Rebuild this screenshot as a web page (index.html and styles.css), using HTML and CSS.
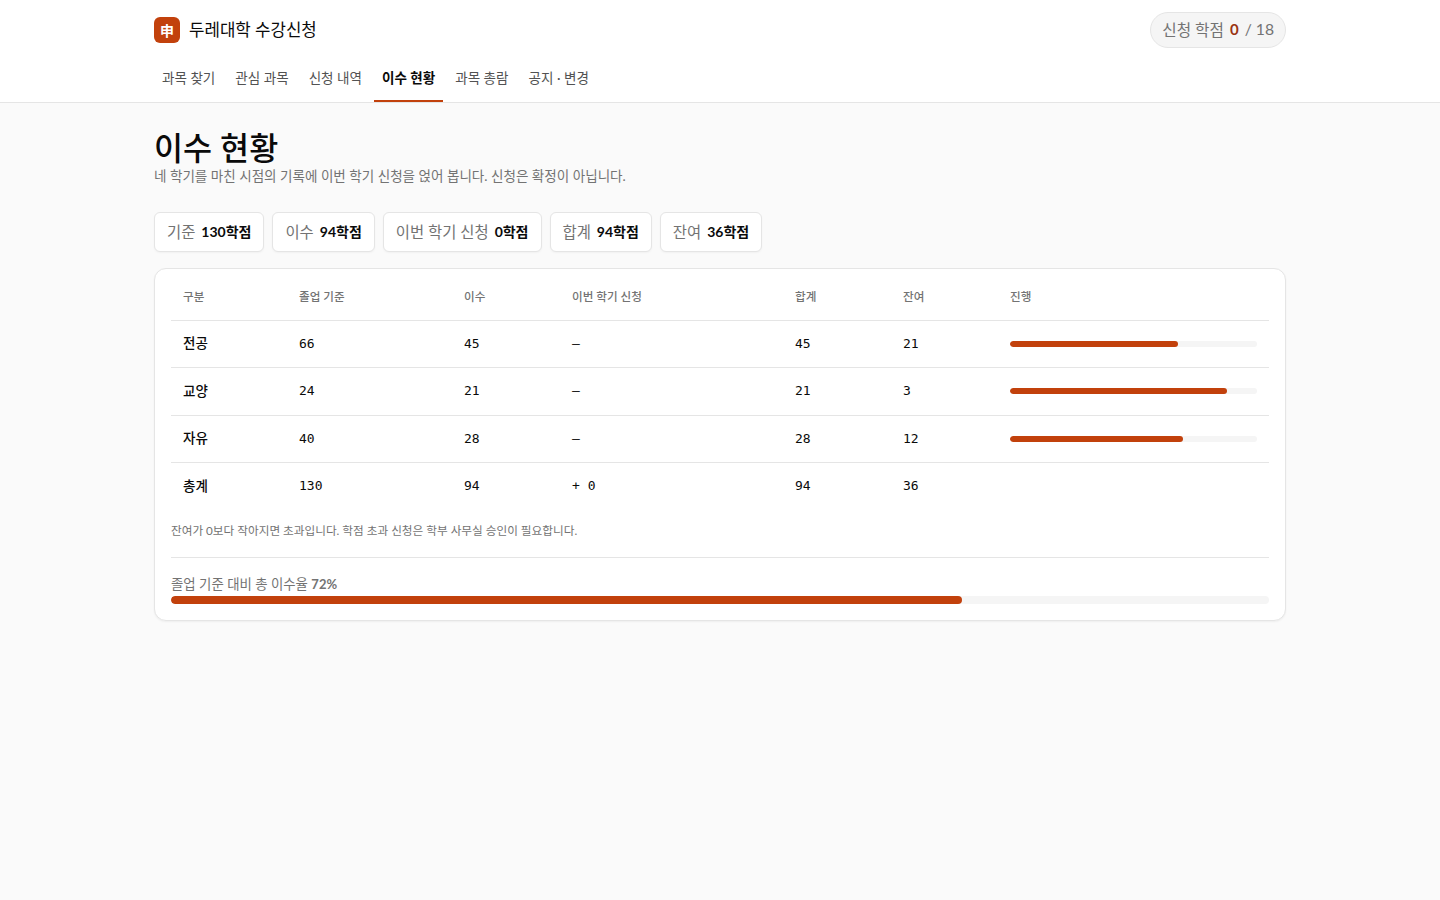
FILE: index.html
```html
<!doctype html>
<html lang="ko">
<head>
  <meta charset="utf-8">
  <title>이수 현황</title>
  <link rel="stylesheet" href="styles.css">
</head>
<body>
  <header class="topbar">
    <div class="wrap">
      <div class="brandRow">
        <div class="brand">
          <span class="logo">申</span>
          <span class="brandName">두레대학 수강신청</span>
        </div>
        <div class="credits">신청 학점 <b>0</b> / 18</div>
      </div>
      <nav class="tabs">
        <a class="tab">과목 찾기</a>
        <a class="tab">관심 과목</a>
        <a class="tab">신청 내역</a>
        <a class="tab active">이수 현황</a>
        <a class="tab">과목 총람</a>
        <a class="tab">공지 · 변경</a>
      </nav>
    </div>
  </header>

  <main class="wrap">
    <h1 class="title">이수 현황</h1>
    <p class="sub">네 학기를 마친 시점의 기록에 이번 학기 신청을 얹어 봅니다. 신청은 확정이 아닙니다.</p>

    <div class="chips">
      <div class="chip">기준 <b>130학점</b></div>
      <div class="chip">이수 <b>94학점</b></div>
      <div class="chip">이번 학기 신청 <b>0학점</b></div>
      <div class="chip">합계 <b>94학점</b></div>
      <div class="chip">잔여 <b>36학점</b></div>
    </div>

    <section class="card">
      <table class="grid">
        <colgroup>
          <col class="c1"><col class="c2"><col class="c3"><col class="c4"><col class="c5"><col class="c6"><col class="c7">
        </colgroup>
        <thead>
          <tr><th>구분</th><th>졸업 기준</th><th>이수</th><th>이번 학기 신청</th><th>합계</th><th>잔여</th><th>진행</th></tr>
        </thead>
        <tbody>
          <tr>
            <td class="name">전공</td><td class="num">66</td><td class="num">45</td><td class="num">–</td><td class="num">45</td><td class="num">21</td>
            <td><div class="bar"><div class="fill" style="width:68%"></div></div></td>
          </tr>
          <tr>
            <td class="name">교양</td><td class="num">24</td><td class="num">21</td><td class="num">–</td><td class="num">21</td><td class="num">3</td>
            <td><div class="bar"><div class="fill" style="width:88%"></div></div></td>
          </tr>
          <tr>
            <td class="name">자유</td><td class="num">40</td><td class="num">28</td><td class="num">–</td><td class="num">28</td><td class="num">12</td>
            <td><div class="bar"><div class="fill" style="width:70%"></div></div></td>
          </tr>
          <tr class="total">
            <td class="name">총계</td><td class="num">130</td><td class="num">94</td><td class="num">+ 0</td><td class="num">94</td><td class="num">36</td>
            <td></td>
          </tr>
        </tbody>
      </table>

      <p class="note">잔여가 0보다 작아지면 초과입니다. 학점 초과 신청은 학부 사무실 승인이 필요합니다.</p>

      <div class="overall">
        <div class="overallLabel">졸업 기준 대비 총 이수율 <b>72%</b></div>
        <div class="bar big"><div class="fill" style="width:72%"></div></div>
      </div>
    </section>
  </main>
</body>
</html>
```

FILE: styles.css
```css
* {
  box-sizing: border-box;
}
body {
  margin: 0;
  min-height: 100vh;
  background-color: #fafafa;
  color: #0a0a0a;
  font-family: "Lato", "Noto Sans CJK KR", sans-serif;
  font-size: 14px;
}
.wrap {
  width: 1132px;
  margin: 0 auto;
}

/* top bar */
.topbar {
  background-color: #ffffff;
  border-bottom: 1px solid #e5e5e5;
  height: 103px;
}
.brandRow {
  display: flex;
  justify-content: space-between;
  align-items: center;
  height: 60px;
}
.brand {
  display: flex;
  align-items: center;
  gap: 9px;
}
.logo {
  width: 26px;
  height: 26px;
  border-radius: 6px;
  background-color: #c2410c;
  color: #ffffff;
  font-size: 14px;
  font-weight: 700;
  display: flex;
  align-items: center;
  justify-content: center;
}
.brandName {
  font-size: 16.8px;
  font-weight: 400;
  padding-bottom: 2px;
}
.credits {
  height: 36px;
  padding: 0 11px 2px;
  border: 1px solid #e5e5e5;
  border-radius: 18px;
  background-color: #f5f5f5;
  color: #737373;
  font-size: 15.7px;
  display: flex;
  align-items: center;
  gap: 6px;
}
.credits b {
  color: #9a3412;
  font-size: 15px;
  font-weight: 700;
}
.tabs {
  display: flex;
  gap: 4px;
  height: 42px;
}
.tab {
  padding: 0 8px;
  height: 42px;
  line-height: 37px;
  font-size: 13.55px;
  color: #525252;
}
.tab.active {
  color: #0a0a0a;
  font-weight: 600;
  border-bottom: 2px solid #c2410c;
}

/* heading */
.title {
  margin: 26px 0 0;
  font-size: 31.6px;
  font-weight: 500;
  line-height: 38px;
}
.sub {
  margin: 0;
  font-size: 13.55px;
  line-height: 18px;
  color: #737373;
}

/* chips */
.chips {
  display: flex;
  gap: 8px;
  margin-top: 27px;
}
.chip {
  height: 40px;
  padding: 0 12px 3px;
  display: flex;
  align-items: center;
  gap: 6px;
  background-color: #ffffff;
  border: 1px solid #e5e5e5;
  border-radius: 6px;
  box-shadow: 0 1px 2px rgba(0, 0, 0, 0.04);
  color: #737373;
  font-size: 15.4px;
}
.chip b {
  color: #0a0a0a;
  font-size: 14px;
  font-weight: 700;
}

/* table card */
.card {
  margin-top: 16px;
  padding: 0 16px;
  height: 353px;
  background-color: #ffffff;
  border: 1px solid #e5e5e5;
  border-radius: 12px;
  box-shadow: 0 1px 2px rgba(0, 0, 0, 0.05);
}
.grid {
  width: 100%;
  table-layout: fixed;
  border-collapse: collapse;
}
.c1 { width: 116px; }
.c2 { width: 165px; }
.c3 { width: 108px; }
.c4 { width: 223px; }
.c5 { width: 108px; }
.c6 { width: 107px; }
.grid th {
  height: 51px;
  padding: 3px 12px 0;
  text-align: left;
  font-size: 11.6px;
  font-weight: 500;
  color: #737373;
  border-bottom: 1px solid #e5e5e5;
}
.grid td {
  height: 47.5px;
  padding: 0 12px;
  font-size: 13.5px;
  border-bottom: 1px solid #e5e5e5;
}
.grid .name {
  font-weight: 500;
  padding-bottom: 3px;
}
.grid .num {
  font-family: "DejaVu Sans Mono", monospace;
  font-size: 13px;
  padding-bottom: 1px;
}
.grid .total td {
  border-bottom: 0;
  padding-bottom: 3px;
}
.grid .total .name {
  padding-bottom: 4px;
}
.bar {
  height: 6px;
  border-radius: 3px;
  background-color: #f5f5f5;
  overflow: hidden;
}
.bar.big {
  height: 8px;
  border-radius: 4px;
}
.fill {
  height: 100%;
  border-radius: inherit;
  background-color: #c2410c;
}
.note {
  margin: 12px 0 0;
  padding-bottom: 17px;
  border-bottom: 1px solid #e5e5e5;
  font-size: 11.65px;
  line-height: 18px;
  color: #737373;
}
.overall {
  margin-top: 15px;
}
.overallLabel {
  font-size: 13.4px;
  line-height: 23px;
  color: #737373;
}
.overallLabel b {
  font-size: 13px;
  font-weight: 700;
}
```
